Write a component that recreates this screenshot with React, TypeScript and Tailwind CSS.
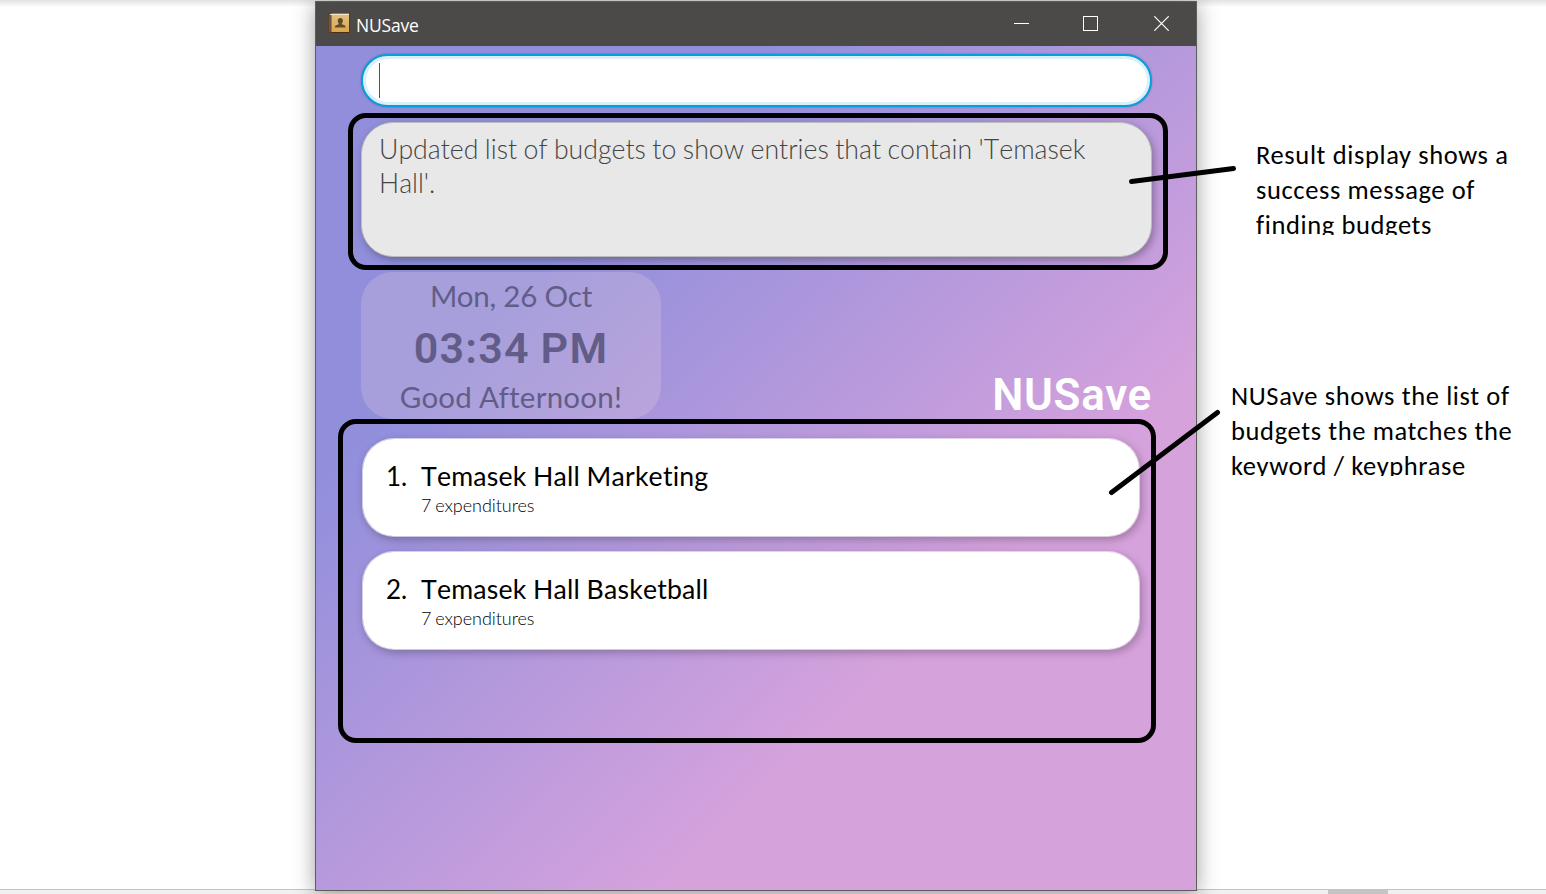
import type { ReactNode } from "react";

function BookIcon() {
  return (
    <svg width="22" height="20" viewBox="0 0 22 20" aria-hidden="true">
      <defs>
        <linearGradient id="cover" x1="0" y1="0" x2="0" y2="1">
          <stop offset="0" stopColor="#e3c185" />
          <stop offset="1" stopColor="#dba648" />
        </linearGradient>
      </defs>
      <rect x="0" y="0" width="21.5" height="20" rx="1" fill="#4b3018" />
      <rect x="0.5" y="0.5" width="3" height="19" fill="#6b5644" />
      <rect x="3.5" y="0.5" width="17.5" height="18.5" fill="url(#cover)" />
      <rect x="2" y="1" width="19" height="1" fill="#f6e6c6" />
      <path
        d="M12.3 5c1.6 0 2.6 1.1 2.6 2.7 0 1.2-.5 2-1 2.600v.9c1.400.5 3.800.9 3.800 3.300H6.900c0-2.400 2.400-2.800 3.800-3.300v-.9c-.5-.6-1-1.400-1-2.600C9.700 6.100 10.700 5 12.300 5z"
        fill="#5e4a2c"
      />
    </svg>
  );
}

function TitleBar() {
  return (
    <header className="flex h-[44px] shrink-0 items-start justify-between bg-[#4c4a48] pl-[12px] pr-[27px]">
      <div className="flex items-start gap-[6px] pt-[11px]">
        <BookIcon />
        <span className="font-['Open_Sans',sans-serif] text-[17.5px] leading-6 tracking-[-0.2px] text-white">
          NUSave
        </span>
      </div>
      <div className="flex items-center gap-[54px] pt-[14px]">
        <svg width="15" height="15" viewBox="0 0 15 15" stroke="#fff" fill="none">
          <path d="M0 7.500H15" />
        </svg>
        <svg width="15" height="15" viewBox="0 0 15 15" stroke="#fff" fill="none" className="mr-[2px]">
          <rect x="0.5" y="0.5" width="14" height="14" />
        </svg>
        <svg width="15" height="15" viewBox="0 0 15 15" stroke="#fff" strokeWidth="1.2" fill="none">
          <path d="M0.300 0.300L14.700 14.700M14.700 0.300L0.300 14.700" />
        </svg>
      </div>
    </header>
  );
}

function BudgetCard({ index, name, detail }: { index: number; name: string; detail: string }) {
  return (
    <li className="flex h-[99px] w-[778px] rounded-[32px] border border-white/60 bg-white bg-clip-padding pl-[23px] pt-[21px] text-black shadow-[2px_3px_8px_rgba(0,0,0,0.25)]">
      <span className="w-[35px] text-[26px] leading-8">{index}.</span>
      <div className="flex flex-col">
        <span className="text-[26.670px] leading-8 tracking-[0.2px] [font-kerning:none] [word-spacing:-0.5px]">
          {name}
        </span>
        <span className="text-[18px] font-light leading-[26px] tracking-[-0.05px] [word-spacing:-1px]">{detail}</span>
      </div>
    </li>
  );
}

function Note({ className, children }: { className: string; children: ReactNode }) {
  return (
    <p
      className={`overflow-hidden whitespace-pre font-['Carlito','Lato',sans-serif] text-[26.500px] leading-[35px] tracking-[0.620px] text-black ${className}`}
    >
      {children}
    </p>
  );
}

export default function App() {
  return (
    <div className="relative flex h-[894px] w-[1546px] flex-col overflow-hidden bg-white font-['Lato',sans-serif]">
      <div className="flex h-[889px] shrink-0 bg-[linear-gradient(#e2e2e2,#fff_7px)]">
        <div className="w-[315px] shrink-0" />
        <main className="relative z-10 mt-px flex h-[890px] w-[882px] shrink-0 flex-col border border-[#5c5c5c] shadow-[0_3px_20px_rgba(0,0,0,0.38)]">
          <TitleBar />
          <div className="flex grow flex-col bg-[linear-gradient(to_bottom_right,#918fdc_0%,#918fdc_26%,#d6a2dc_70%,#d6a2dc_100%)] pl-[45px] pr-[44px] pt-[8px]">
            <div className="flex h-[53px] w-[791px] items-center rounded-full border-2 border-[#079fd9] bg-white pl-[16px] shadow-[inset_0_0_0_3px_#d9f0fa,0_0_2px_rgba(60,60,90,0.500)]">
              <span className="h-[35px] w-px bg-[#555]" />
            </div>
            <div className="mt-[15px] h-[135px] w-[791px] rounded-[32px] border border-[#bdbcbd] bg-[#e8e8e8] pl-[17px] pt-[9px] text-[26.670px] font-light leading-[34px] text-[#444] shadow-[2px_3px_8px_rgba(0,0,0,0.3)] [font-kerning:none] [font-variant-ligatures:none] [word-spacing:-0.8px]">
              <p className="whitespace-nowrap">Updated list of budgets to show entries that contain 'Temasek</p>
              <p>Hall'.</p>
            </div>
            <div className="mt-[15px] flex h-[147px] items-end justify-between">
              <section className="flex h-[147px] w-[300px] flex-col items-center rounded-[32px] bg-[rgba(255,224,216,0.2)] text-[#625d88]">
                <span className="mt-[5px] text-[29.500px] leading-[38px] tracking-[-0.2px]">Mon, 26 Oct</span>
                <span className="mt-[5px] font-['Roboto',sans-serif] text-[43px] font-semibold leading-[56px] tracking-[1.2px] [word-spacing:-1px]">
                  03:34 PM
                </span>
                <span className="mt-[2px] text-[29.500px] leading-[38px] tracking-[0.250px]">Good Afternoon!</span>
              </section>
              <h1 className="-mb-px font-['Roboto',sans-serif] text-[44px] font-semibold leading-[50px] tracking-[0.7px] text-white">
                NUSave
              </h1>
            </div>
            <ul className="mt-[19px] flex flex-col gap-[14px] pl-px">
              <BudgetCard index={1} name="Temasek Hall Marketing" detail="7 expenditures" />
              <BudgetCard index={2} name="Temasek Hall Basketball" detail="7 expenditures" />
            </ul>
          </div>
        </main>
        <aside className="flex flex-col pl-[34px]">
          <Note className="mt-[138px] h-[97px] pl-[25px]">
            {"Result display shows a\nsuccess message of\nfinding budgets"}
          </Note>
          <Note className="mt-[144px] h-[97px]">
            {"NUSave shows the list of\nbudgets the matches the\nkeyword / keyphrase"}
          </Note>
        </aside>
      </div>
      <footer className="flex h-[5px] justify-end border-t border-[#c4c4c4] bg-[#f0f0f0] pr-[158px]">
        <span className="h-full w-[60px] bg-[#c4c4c4]" />
      </footer>
      <div className="absolute left-[348px] top-[113px] z-20 h-[157px] w-[820px] rounded-[18px] border-[5px] border-black" />
      <div className="absolute left-[338px] top-[419px] z-20 h-[324px] w-[818px] rounded-[18px] border-[5px] border-black" />
      <svg
        className="absolute left-0 top-0 z-20"
        width="1546"
        height="894"
        stroke="#000"
        strokeWidth="5"
        strokeLinecap="round"
      >
        <path d="M1131.500 181.500L1233.500 168.500M1111.500 492.500L1217.500 412.500" />
      </svg>
    </div>
  );
}
